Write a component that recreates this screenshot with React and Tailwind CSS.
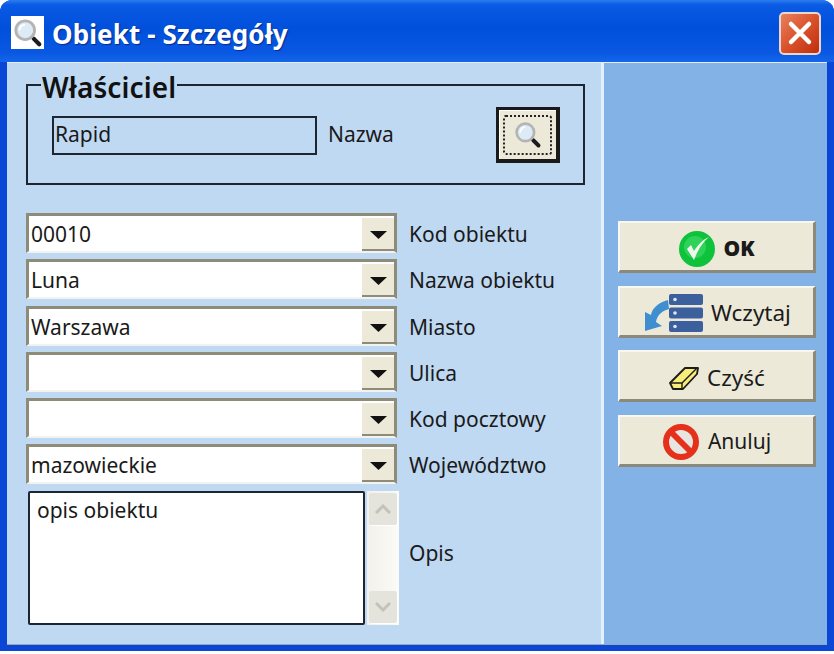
import { Fragment } from 'react'

const fields = [
    { value: '00010', label: 'Kod obiektu' },
    { value: 'Luna', label: 'Nazwa obiektu' },
    { value: 'Warszawa', label: 'Miasto' },
    { value: '', label: 'Ulica' },
    { value: '', label: 'Kod pocztowy' },
    { value: 'mazowieckie', label: 'Województwo' },
]

const Lens = ({ size }) => (
    <svg width={size} height={size} viewBox="0 0 32 32">
        <path d="M20 20l8 8" stroke="#9a9a9a" strokeWidth="3" strokeLinecap="round" />
        <path d="M22 22l6 6" stroke="#1c1c1c" strokeWidth="4.5" strokeLinecap="round" />
        <circle cx="13" cy="13" r="10" fill="#dcebf5" stroke="#b4b4b4" strokeWidth="3" />
        <path d="M7 13a6 6 0 0 1 6-6" fill="none" stroke="#fff" strokeWidth="2" />
    </svg>
)

const CloseIcon = () => (
    <div className="flex h-[43px] w-[42px] items-center justify-center rounded-[5px] border-2 border-[#e9d6cf] bg-gradient-to-br from-[#e8805c] via-[#d9512a] to-[#bf2d0c]">
        <svg width="28" height="28" viewBox="0 0 28 28">
            <path d="M5 5l18 18M23 5L5 23" stroke="#fff" strokeWidth="4.5" strokeLinecap="round" />
        </svg>
    </div>
)

const OkIcon = () => (
    <svg width="38" height="38" viewBox="0 0 38 38">
        <circle cx="19" cy="19" r="18" fill="#0fc23c" />
        <circle cx="17" cy="17" r="11" fill="#2fd258" />
        <path d="M9 19l7 11C20 20 24 13 31 7c-7 3-11 8-15 14l-3-6z" fill="#eef7ee" />
    </svg>
)

const LoadIcon = () => (
    <svg width="62" height="42" viewBox="0 0 62 42">
        <rect x="27" y="2" width="34" height="11" rx="2" fill="#3c5f9e" />
        <rect x="27" y="15.5" width="34" height="11" rx="2" fill="#3c5f9e" />
        <rect x="27" y="29" width="34" height="11" rx="2" fill="#3c5f9e" />
        <circle cx="33" cy="7.5" r="1.8" fill="#dfe8f5" />
        <circle cx="33" cy="21" r="1.8" fill="#dfe8f5" />
        <circle cx="33" cy="34.5" r="1.8" fill="#dfe8f5" />
        <path d="M26 8C15 11 10 17 9 23l-6-3 0 19 17-5-6-4c1-6 5-11 13-13z" fill="#3f8fd0" />
    </svg>
)

const EraserIcon = () => (
    <svg width="32" height="26" viewBox="0 0 32 26">
        <path d="M2 18L17 3h13l-1 6-14 15H5z" fill="#f7ee7a" stroke="#1b1b1b" strokeWidth="1.8" strokeLinejoin="round" />
        <path d="M2 18h12l15-15" fill="none" stroke="#1b1b1b" strokeWidth="1.4" />
        <path d="M14 18v6" stroke="#1b1b1b" strokeWidth="1.4" />
    </svg>
)

const CancelIcon = () => (
    <svg width="38" height="38" viewBox="0 0 38 38">
        <circle cx="19" cy="19" r="15" fill="#e8e4e0" stroke="#e5301c" strokeWidth="6" />
        <path d="M9 9l20 20" stroke="#e5301c" strokeWidth="6" />
    </svg>
)

const ActionButton = ({ icon, label, text, gap }) => (
    <button className={`flex h-[52px] w-[198px] items-center justify-center border-t-2 border-l-2 border-t-[#f8f7f0] border-l-[#f8f7f0] border-r-[3px] border-b-[3px] border-r-[#8b897c] border-b-[#8b897c] bg-[#ece9d8] pt-[4px] text-[#1a1a1a] ${gap} ${text}`}>
        {icon}
        <span>{label}</span>
    </button>
)

const Combo = ({ value }) => (
    <div className="flex h-[40px] w-[371px] items-stretch border-t-[3px] border-l-[3px] border-r-[3px] border-b-2 border-t-[#8e8c78] border-l-[#8e8c78] border-r-[#8e8c78] border-b-[#f2f2f0] bg-white">
        <span className="flex-1 pl-[2px] text-[21px] leading-[36px] text-[#1a1a1a]">{value}</span>
        <span className="mt-[2px] flex w-[32px] items-center justify-center border-b-2 border-[#8e8c78] bg-[#ece9d8] pt-[3px]">
            <svg width="17" height="8" viewBox="0 0 17 8"><path d="M0 0h17L8.5 8z" fill="#111" /></svg>
        </span>
    </div>
)

const ScrollArrow = ({ d }) => (
    <div className="flex h-[32px] w-[28px] items-center justify-center rounded-[2px] bg-[#e4e3dc] shadow-[1px_1px_0_#fff]">
        <svg width="16" height="10" viewBox="0 0 16 10">
            <path d={d} fill="none" stroke="#c4c3b8" strokeWidth="3" />
        </svg>
    </div>
)

const App = () => {
    return (
        <div className="h-[654px] w-[834px] bg-white font-['Noto_Sans','DejaVu_Sans',sans-serif]">
            <div className="flex h-[651px] flex-col overflow-hidden rounded-t-[12px] bg-[#0a47d6] px-[7px] pb-[6px]">
                {/* title bar */}
                <div className="-mx-[7px] flex h-[62px] items-center bg-[linear-gradient(#2c7df0_0%,#0a5ae4_8%,#0050dc_45%,#0a58e2_85%,#1566ea_100%)] pl-[11px] pr-[13px] pt-[4px]">
                    <div className="-mt-[1px] flex h-[33px] w-[33px] items-center justify-center bg-white">
                        <Lens size={30} />
                    </div>
                    <span className="ml-[8px] mt-[3px] flex-1 text-[26px] font-bold tracking-[0.1px] text-white [text-shadow:1px_1px_1px_#0a2a8a]">Obiekt - Szczegóły</span>
                    <CloseIcon />
                </div>

                <div className="flex min-h-0 flex-1 border-t border-[#e6eef8] border-b border-b-[#9aa6b0]">
                    {/* form side */}
                    <div className="flex w-[594px] flex-col bg-[#c0d9f3] pl-[19px] pr-[16px]">
                        <fieldset className="mt-[7px] h-[115px] w-[559px] border-2 border-[#1d2530] pl-[24px] pr-[23px]">
                            <legend className="-ml-[11px] h-[30px] px-[1px] text-[28px] leading-[34px] font-semibold tracking-[0.1px] text-[#111]">Właściciel</legend>
                            <div className="flex items-center pt-[7px]">
                                <div className="h-[39px] w-[265px] border-2 border-[#1d2530] pl-[1px] text-[21px] leading-[33px] text-[#1a1a1a]">Rapid</div>
                                <span className="ml-[11px] flex-1 text-[21px] text-[#1a1a1a]">Nazwa</span>
                                <div className="flex h-[56px] w-[64px] items-center justify-center border-[3px] border-r-[4px] border-b-[4px] border-[#1a1a1a] bg-[#ece9d8] shadow-[inset_1px_1px_0_#fff]">
                                    <div className="flex h-[40px] w-[49px] items-center justify-center rounded-[3px] border-2 border-dotted border-[#222]">
                                        <Lens size={28} />
                                    </div>
                                </div>
                            </div>
                        </fieldset>

                        <div className="mt-[28px] grid grid-cols-[371px_1fr] gap-y-[6.3px]">
                            {fields.map((f) => (
                                <Fragment key={f.label}>
                                    <Combo value={f.value} />
                                    <span className="h-[40px] pl-[12px] text-[21px] leading-[42px] text-[#1a1a1a]">{f.label}</span>
                                </Fragment>
                            ))}
                            <div className="flex h-[134px] gap-[2px] pl-[2px]">
                                <div className="w-[337px] shrink-0 rounded-[2px] border-2 border-[#1d2530] bg-white pl-[7px] text-[21px] leading-[35px] text-[#1a1a1a]">opis obiektu</div>
                                <div className="flex w-[32px] shrink-0 flex-col justify-between bg-gradient-to-r from-[#f2f1ea] to-[#fbfbf7] p-[2px]">
                                    <ScrollArrow d="M1 9l7-7 7 7" />
                                    <ScrollArrow d="M1 1l7 7 7-7" />
                                </div>
                            </div>
                            <span className="mt-[42px] self-start pl-[12px] text-[21px] leading-[40px] text-[#1a1a1a]">Opis</span>
                        </div>
                    </div>

                    {/* button side */}
                    <div className="flex flex-1 flex-col gap-[12.5px] border-l-[3px] border-[#e6f0fa] bg-[#82b2e6] pl-[14px] pt-[158px]">
                        <ActionButton icon={<OkIcon />} label="OK" text="text-[21px] font-black" gap="gap-[7px]" />
                        <ActionButton icon={<LoadIcon />} label="Wczytaj" text="text-[22.5px]" gap="gap-[7px]" />
                        <ActionButton icon={<EraserIcon />} label="Czyść" text="text-[22.5px]" gap="gap-[7px]" />
                        <ActionButton icon={<CancelIcon />} label="Anuluj" text="text-[21px]" gap="gap-[8px]" />
                    </div>
                </div>
            </div>
        </div>
    )
}

export default App
